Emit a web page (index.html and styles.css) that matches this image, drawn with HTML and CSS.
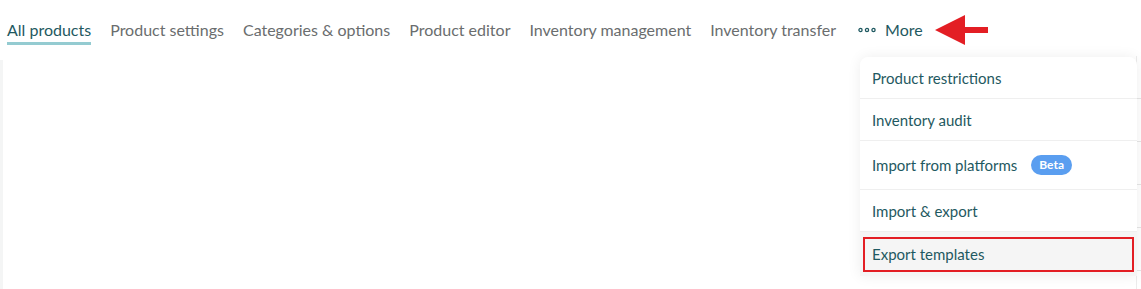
FILE: index.html
```html
<!DOCTYPE html>
<html lang="en">

<head>
    <meta charset="UTF-8">
    <meta name="viewport" content="width=device-width, initial-scale=1.0">
    <title>Products</title>
    <link rel="stylesheet" href="styles.css">
</head>

<body>
    <div class="page">
        <nav class="tabs">
            <a class="tab active" href="#">All products</a>
            <a class="tab" href="#">Product settings</a>
            <a class="tab" href="#">Categories &amp; options</a>
            <a class="tab" href="#">Product editor</a>
            <a class="tab" href="#">Inventory management</a>
            <a class="tab" href="#">Inventory transfer</a>
            <a class="tab more" href="#">
                <svg class="dots" width="18" height="6" viewBox="0 0 18 6">
                    <circle cx="2.5" cy="3" r="1.6" fill="none" stroke="#1f5961" stroke-width="1.3" />
                    <circle cx="9" cy="3" r="1.6" fill="none" stroke="#1f5961" stroke-width="1.3" />
                    <circle cx="15.5" cy="3" r="1.6" fill="none" stroke="#1f5961" stroke-width="1.3" />
                </svg>
                More
            </a>
        </nav>

        <svg class="arrow" width="54" height="30" viewBox="0 0 54 30">
            <polygon points="0,15 30,0 30,12 53,12 53,18 30,18 30,30" fill="#e31e24" />
        </svg>

        <div class="content">
            <div class="table-edge"></div>
        </div>

        <div class="dropdown">
            <a class="menu-item" href="#">Product restrictions</a>
            <a class="menu-item" href="#">Inventory audit</a>
            <a class="menu-item tall" href="#">Import from platforms <span class="badge">Beta</span></a>
            <a class="menu-item" href="#">Import &amp; export</a>
            <a class="menu-item hover marked" href="#">Export templates</a>
        </div>
    </div>
</body>

</html>
```

FILE: styles.css
```css
body {
    margin: 0;
    font-family: Lato, "Noto Sans", sans-serif;
    background-color: white;
    overflow: hidden;
}

.page {
    position: relative;
    width: 1141px;
    height: 289px;
}

.tabs {
    display: flex;
    align-items: center;
    gap: 19px;
    padding: 0 0 0 7px;
    height: 56px;
}

.tab {
    font-size: 16px;
    color: #6a6d6e;
    text-decoration: none;
    padding: 4px 0 3px;
    border-bottom: 3px solid transparent;
    margin-top: 5px;
}

.tab.active {
    color: #1f5961;
    border-bottom-color: #94cbd1;
}

.tab.more {
    color: #1f5961;
    display: flex;
    align-items: center;
    gap: 9px;
    margin-left: 3px;
}

.arrow {
    position: absolute;
    left: 935px;
    top: 15px;
}

.content {
    display: flex;
    justify-content: space-between;
    height: 233px;
}

.content::before {
    content: "";
    width: 3px;
    margin-top: 4px;
    background-color: #f4f5f5;
}

.table-edge {
    width: 4px;
    border-left: 1px solid #ececec;
    background: repeating-linear-gradient(#fff 0, #fff 42px, #e6e6e6 42px, #e6e6e6 43px);
}

.dropdown {
    position: absolute;
    left: 860px;
    top: 57px;
    width: 277px;
    background-color: white;
    border-radius: 8px 8px 0 0;
    box-shadow: 0 0 14px rgba(0, 0, 0, 0.07);
}

.menu-item {
    position: relative;
    display: flex;
    align-items: center;
    gap: 14px;
    height: 41px;
    padding: 0 12px;
    font-size: 15px;
    color: #1f5961;
    text-decoration: none;
    border-bottom: 1px solid #efefef;
}

.menu-item.tall {
    height: 48px;
}

.menu-item.hover {
    background-color: #f5f5f5;
    height: 44px;
    border-bottom: none;
}

.menu-item.marked::after {
    content: "";
    position: absolute;
    left: 3px;
    right: 3px;
    top: 5px;
    bottom: 4px;
    border: 2px solid #e31e24;
}

.badge {
    background-color: #5a9ef0;
    color: white;
    font-size: 12px;
    font-weight: bold;
    padding: 2px 8px 3px;
    border-radius: 10px;
}
```
